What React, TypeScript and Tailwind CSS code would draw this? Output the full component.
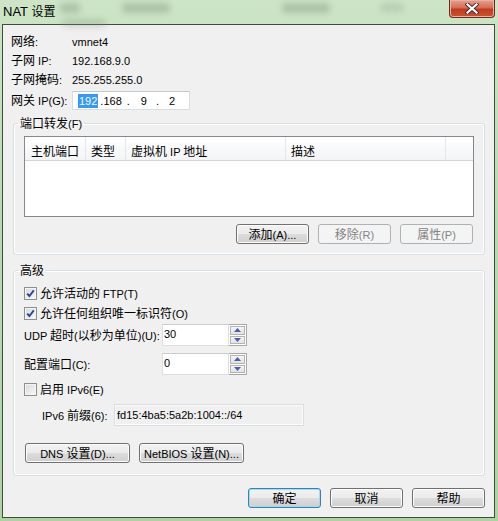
import React from "react";

const cjk = /([\u3000-\u9fff\uff00-\uffef]+)/;

const T = ({ s }: { s: string }) => {
  const parts = s.split(cjk);
  return (
    <>
      {parts.map((p, i) =>
        p === "" ? null : cjk.test(p) ? (
          <span key={i} className="text-[12px]">
            {p}
          </span>
        ) : (
          <span key={i} className="text-[11px]">
            {p}
          </span>
        )
      )}
    </>
  );
};

const btnNormal =
  "border-[#707070] bg-[linear-gradient(#f2f2f2,#ebebeb_50%,#dddddd_50%,#cfcfcf)] shadow-[inset_0_0_0_1px_#fcfcfc] text-black";
const btnDefault =
  "border-[#3c7fb1] bg-[linear-gradient(#f2f2f2,#ebebeb_50%,#dddddd_50%,#cfcfcf)] shadow-[inset_0_0_0_1px_#9ddcf7] text-black";
const btnDisabled = "border-[#adb2b5] bg-[#f4f4f4] text-[#838383]";

const Btn = ({
  label,
  width,
  kind = "normal",
}: {
  label: string;
  width: string;
  kind?: "normal" | "default" | "disabled";
}) => {
  const look =
    kind === "default" ? btnDefault : kind === "disabled" ? btnDisabled : btnNormal;
  return (
    <div
      className={`h-[20px] ${width} flex items-center justify-center rounded-[3px] border leading-[14px] ${look}`}
    >
      <span>
        <T s={label} />
      </span>
    </div>
  );
};

const Check = ({ checked }: { checked?: boolean }) => (
  <div className="w-[13px] h-[13px] border border-[#8e8f8f] bg-[linear-gradient(135deg,#d8d8d8,#f9f9f9)] shadow-[inset_0_0_0_1px_#f4f4f4] flex items-center justify-center">
    {checked && (
      <svg width="11" height="11" viewBox="0 0 11 11">
        <path
          d="M2.2 5.6 L4.4 8 L8.8 2.4"
          fill="none"
          stroke="#2a4596"
          strokeWidth="1.9"
          strokeLinejoin="miter"
        />
      </svg>
    )}
  </div>
);

const Arrow = ({ up }: { up?: boolean }) => (
  <div className="flex-1 border border-[#b4b4b4] bg-[linear-gradient(#f6f6f6,#e2e2e2)] flex items-center justify-center">
    <svg width="7" height="4" viewBox="0 0 7 4">
      <path d={up ? "M0 4 L3.5 0 L7 4 Z" : "M0 0 L3.5 4 L7 0 Z"} fill="#4b5fae" />
    </svg>
  </div>
);

const Spin = ({ value }: { value: string }) => (
  <div className="flex h-[22px] w-[85px]">
    <div className="flex-1 bg-white border border-[#dcdfe4] border-t-[#c9ccd2] pl-[1px] pt-[2px] text-[11px] leading-[14px]">
      {value}
    </div>
    <div className="w-[18px] flex flex-col gap-[1px] border border-l-0 border-[#a8a8a8] bg-white p-[1px]">
      <Arrow up />
      <Arrow />
    </div>
  </div>
);

const Row = ({ label, value }: { label: string; value: string }) => (
  <div className="flex items-center h-[19px] ml-[8px] leading-[14px]">
    <div className="w-[61px]">
      <T s={label} />
    </div>
    <div className="text-[11px]">{value}</div>
  </div>
);

export default function App() {
  return (
    <div className="w-[498px] h-[521px] flex flex-col bg-[linear-gradient(180deg,#cde5c6,#b9dab0_40%,#acd3a1)] font-['Liberation_Sans','Noto_Sans_CJK_SC',sans-serif] text-black">
      {/* title bar */}
      <div className="relative h-[24px] flex items-start justify-between">
        <div className="absolute left-[60px] top-[3px] w-[20px] h-[10px] rounded bg-[#7d8f7a] opacity-40 blur-[3px]" />
        <div className="absolute left-[122px] top-[3px] w-[48px] h-[10px] rounded bg-[#7d8f7a] opacity-40 blur-[3px]" />
        <div className="absolute left-[282px] top-[3px] w-[48px] h-[10px] rounded bg-[#7d8f7a] opacity-40 blur-[3px]" />
        <div className="absolute left-[380px] top-[3px] w-[24px] h-[9px] rounded bg-[#8c9c89] opacity-30 blur-[3px]" />
        <div className="absolute left-[62px] top-[19px] w-[44px] h-[8px] rounded bg-[#7d8f7a] opacity-30 blur-[3px]" />
        <div className="relative ml-[3px] mt-[3px] leading-[15px]">
          <span className="text-[13px]">NAT </span>
          <span className="text-[12px]">设置</span>
        </div>
        <div className="relative mr-[3px] w-[46px] h-[18px] rounded-b-[4px] border border-t-0 border-[#6a2c22] bg-[linear-gradient(#e6a190,#d26e55_45%,#c33b1f_55%,#c9532f)] shadow-[inset_0_0_0_1px_#eab0a2] flex items-center justify-center">
          <svg width="14" height="11" viewBox="0 0 14 11">
            <path d="M2.5 1.5 L11.5 9.5 M11.5 1.5 L2.5 9.5" stroke="#4a2a30" strokeWidth="4" strokeLinecap="square" />
            <path d="M2.5 1.5 L11.5 9.5 M11.5 1.5 L2.5 9.5" stroke="#ffffff" strokeWidth="2.2" strokeLinecap="square" />
          </svg>
        </div>
      </div>

      {/* client area */}
      <div className="ml-[2px] mr-[3px] mb-[3px] flex-1 flex flex-col bg-[#f0f0f0] border border-[#3f4d3f]">
        <div className="pt-[7px]">
          <Row label="网络:" value="vmnet4" />
          <Row label="子网 IP:" value="192.168.9.0" />
          <Row label="子网掩码:" value="255.255.255.0" />
          <div className="flex items-center h-[19px] mt-[2px] ml-[8px] leading-[14px]">
            <div className="w-[61px]">
              <T s="网关 IP(G):" />
            </div>
            <div className="w-[118px] h-[19px] bg-white border border-[#d9dce1] border-t-[#c5c8ce] flex items-center text-[11px]">
              <span className="ml-[5px] bg-[#3399ff] text-white px-[1px]">192</span>
              <span className="ml-[2px]">.</span>
              <span>168</span>
              <span className="ml-[5px]">.</span>
              <span className="ml-[11px]">9</span>
              <span className="ml-[9px]">.</span>
              <span className="ml-[10px]">2</span>
            </div>
          </div>
        </div>

        {/* port forwarding */}
        <fieldset className="mt-[6px] ml-[10px] mr-[9px] border border-[#d5dfe5] rounded-[3px] p-0 pb-[10px] shadow-[inset_0_0_0_1px_#ffffff]">
          <legend className="ml-[4px] px-[2px] leading-[14px]">
            <T s="端口转发(F)" />
          </legend>
          <div className="mt-[5px] ml-[10px] w-[450px] h-[81px] border border-[#828790] bg-white">
            <div className="flex h-[24px] border-b border-[#d5d5d5] bg-[linear-gradient(#ffffff,#f3f4f6)] leading-[14px]">
              <div className="w-[61px] pl-[6px] pt-[7px] border-r border-[#e3e8ee]">
                <T s="主机端口" />
              </div>
              <div className="w-[40px] pl-[5px] pt-[7px] border-r border-[#e3e8ee]">
                <T s="类型" />
              </div>
              <div className="w-[160px] pl-[5px] pt-[7px] border-r border-[#e3e8ee]">
                <T s="虚拟机 IP 地址" />
              </div>
              <div className="w-[160px] pl-[5px] pt-[7px] border-r border-[#e3e8ee]">
                <T s="描述" />
              </div>
              <div className="flex-1" />
            </div>
          </div>
          <div className="mt-[7px] mr-[11px] flex justify-end gap-[9px]">
            <Btn label="添加(A)..." width="w-[73px]" />
            <Btn label="移除(R)" width="w-[73px]" kind="disabled" />
            <Btn label="属性(P)" width="w-[73px]" kind="disabled" />
          </div>
        </fieldset>

        {/* advanced */}
        <fieldset className="mt-[8px] ml-[10px] mr-[9px] border border-[#d5dfe5] rounded-[3px] p-0 pb-[12px] shadow-[inset_0_0_0_1px_#ffffff]">
          <legend className="ml-[4px] px-[2px] leading-[14px]">
            <T s="高级" />
          </legend>
          <div className="mt-[5px] ml-[10px] flex items-center gap-[3px] h-[20px] leading-[14px]">
            <Check checked />
            <div>
              <T s="允许活动的 FTP(T)" />
            </div>
          </div>
          <div className="ml-[10px] flex items-center gap-[3px] h-[20px] leading-[14px]">
            <Check checked />
            <div>
              <T s="允许任何组织唯一标识符(O)" />
            </div>
          </div>
          <div className="mt-[1px] ml-[10px] flex items-center leading-[14px]">
            <div className="w-[138px]">
              <T s="UDP 超时(以秒为单位)(U):" />
            </div>
            <Spin value="30" />
          </div>
          <div className="mt-[7px] ml-[10px] flex items-center leading-[14px]">
            <div className="w-[138px]">
              <T s="配置端口(C):" />
            </div>
            <Spin value="0" />
          </div>
          <div className="mt-[4px] ml-[10px] flex items-center gap-[3px] h-[20px] leading-[14px]">
            <Check />
            <div>
              <T s="启用 IPv6(E)" />
            </div>
          </div>
          <div className="mt-[5px] ml-[28px] flex items-center leading-[14px]">
            <div className="w-[72px]">
              <T s="IPv6 前缀(6):" />
            </div>
            <div className="w-[190px] h-[22px] border border-[#dadde2] bg-[#f0f0f0] shadow-[inset_0_0_0_1px_#fbfbfb] pl-[2px] pt-[3px] text-[11px]">
              fd15:4ba5:5a2b:1004::/64
            </div>
          </div>
          <div className="mt-[17px] ml-[11px] flex gap-[9px]">
            <Btn label="DNS 设置(D)..." width="w-[105px]" />
            <Btn label="NetBIOS 设置(N)..." width="w-[105px]" />
          </div>
        </fieldset>

        <div className="mt-[12px] mr-[9px] flex justify-end gap-[9px]">
          <Btn label="确定" width="w-[73px]" kind="default" />
          <Btn label="取消" width="w-[73px]" />
          <Btn label="帮助" width="w-[73px]" />
        </div>
      </div>
    </div>
  );
}
